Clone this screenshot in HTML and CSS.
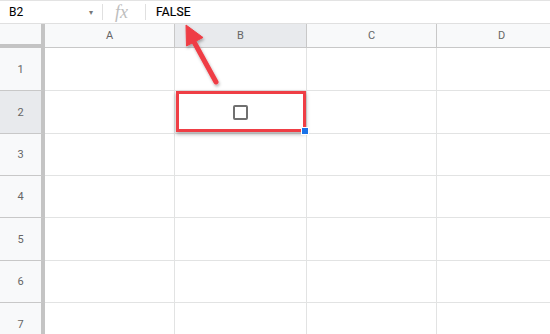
FILE: index.html
```html
<!DOCTYPE html>
<html lang="en">
<head>
    <meta charset="UTF-8">
    <title>Sheet - checkbox</title>
    <link rel="stylesheet" href="styles.css">
</head>
<body>
    <div class="sheet">
        <div class="formula-bar">
            <div class="name-box">
                <span class="cell-ref">B2</span>
                <span class="caret">&#9662;</span>
            </div>
            <div class="fx">fx</div>
            <div class="formula">FALSE</div>
        </div>

        <div class="grid">
            <div class="corner"></div>
            <div class="col-head">A</div>
            <div class="col-head selected">B</div>
            <div class="col-head">C</div>
            <div class="col-head">D</div>

            <div class="row-head">1</div>
            <div class="cell"></div><div class="cell"></div><div class="cell"></div><div class="cell"></div>

            <div class="row-head selected">2</div>
            <div class="cell"></div>
            <div class="cell active">
                <span class="checkbox"></span>
                <div class="highlight"><span class="handle"></span></div>
            </div>
            <div class="cell"></div><div class="cell"></div>

            <div class="row-head">3</div>
            <div class="cell"></div><div class="cell"></div><div class="cell"></div><div class="cell"></div>
            <div class="row-head">4</div>
            <div class="cell"></div><div class="cell"></div><div class="cell"></div><div class="cell"></div>
            <div class="row-head">5</div>
            <div class="cell"></div><div class="cell"></div><div class="cell"></div><div class="cell"></div>
            <div class="row-head">6</div>
            <div class="cell"></div><div class="cell"></div><div class="cell"></div><div class="cell"></div>
            <div class="row-head">7</div>
            <div class="cell"></div><div class="cell"></div><div class="cell"></div><div class="cell"></div>
        </div>

        <!-- annotation arrow pointing at the formula -->
        <svg class="arrow" width="550" height="334" viewBox="0 0 550 334">
            <defs>
                <filter id="shadow" x="-50%" y="-50%" width="200%" height="200%">
                    <feDropShadow dx="1" dy="2" stdDeviation="1.5" flood-color="#000" flood-opacity="0.3"/>
                </filter>
            </defs>
            <g filter="url(#shadow)" fill="#ef3e45" stroke="#ef3e45">
                <line x1="193" y1="40" x2="216" y2="82" stroke-width="5" stroke-linecap="round"/>
                <polygon points="186,25 203,37.5 186.5,46" stroke-width="1" stroke-linejoin="round"/>
            </g>
        </svg>
    </div>
</body>
</html>
```

FILE: styles.css
```css
body {
    margin: 0;
    font-family: Roboto, 'Liberation Sans', sans-serif;
    background-color: #fff;
    color: #000;
}

.sheet {
    position: relative;
    width: 550px;
    height: 334px;
    overflow: hidden;
}

.formula-bar {
    display: flex;
    align-items: center;
    height: 24px;
    box-sizing: border-box;
    border-top: 1px solid #e3e3e3;
    border-bottom: 1px solid #e0e0e0;
    font-size: 12px;
}

.name-box {
    display: flex;
    align-items: center;
    justify-content: space-between;
    width: 103px;
    padding: 0 9px 0 9px;
    box-sizing: border-box;
    border-right: 1px solid #e0e0e0;
    height: 16px;
}

.caret {
    font-size: 8px;
    color: #777;
}

.fx {
    width: 43px;
    height: 16px;
    box-sizing: border-box;
    border-right: 1px solid #e0e0e0;
    font-family: 'Liberation Serif', serif;
    font-style: italic;
    font-size: 18px;
    line-height: 16px;
    color: #bdbdbd;
    padding-left: 12px;
}

.formula {
    padding-left: 10px;
    letter-spacing: 0.2px;
    -webkit-text-stroke: 0.2px #000;
}

.grid {
    display: grid;
    grid-template-columns: 45px 130px 132px 130px 130px;
    grid-template-rows: 24px 43px 43px 42px 42px 43px 42px 43px;
}

.corner {
    background-color: #f8f9fa;
    border-right: 4px solid #c4c4c4;
    border-bottom: 4px solid #c4c4c4;
}

.col-head {
    display: flex;
    align-items: center;
    justify-content: center;
    background-color: #f8f9fa;
    border-right: 1px solid #c8c8c8;
    border-bottom: 1px solid #c8c8c8;
    font-size: 11px;
    color: #666;
}

.row-head {
    display: flex;
    align-items: center;
    justify-content: center;
    background-color: #f8f9fa;
    border-right: 4px solid #c4c4c4;
    border-bottom: 1px solid #c8c8c8;
    font-size: 11px;
    color: #666;
}

.selected {
    background-color: #e8eaed;
}

.cell {
    border-right: 1px solid #e2e3e3;
    border-bottom: 1px solid #e2e3e3;
}

.cell.active {
    position: relative;
    display: flex;
    align-items: center;
    justify-content: center;
}

.checkbox {
    width: 15px;
    height: 15px;
    box-sizing: border-box;
    border: 2px solid #707070;
    border-radius: 2px;
}

.highlight {
    position: absolute;
    top: 0;
    left: 1px;
    right: 0;
    bottom: 1px;
    border: 3px solid #ef3e45;
    box-shadow: 0 2px 4px rgba(0, 0, 0, 0.35);
}

.handle {
    position: absolute;
    right: -6px;
    bottom: -6px;
    width: 6px;
    height: 6px;
    background-color: #1a73e8;
    border: 1px solid #fff;
}

.arrow {
    position: absolute;
    top: 0;
    left: 0;
    pointer-events: none;
}
```
